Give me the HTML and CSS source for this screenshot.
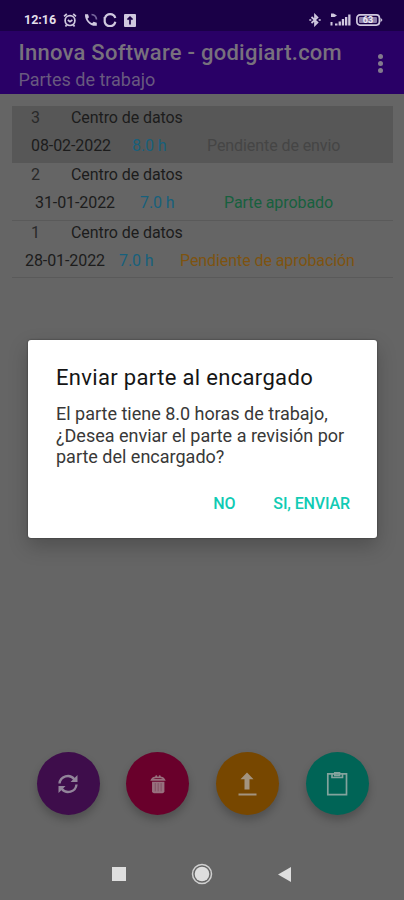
FILE: index.html
```html
<!DOCTYPE html>
<html lang="es">

<head>
  <meta charset="UTF-8">
  <meta name="viewport" content="width=device-width, initial-scale=1">
  <title>Partes de trabajo</title>
  <link rel="stylesheet" href="styles.css">
</head>

<body>
  <div class="status-bar">
    <span class="clock">12:16</span>
    <svg class="alarm" width="14" height="14" viewBox="0 0 14 14">
      <circle cx="7" cy="7.6" r="4.9" />
      <path d="M1 3.4L3.8 1M13 3.4L10.2 1M4.8 7l2.2 1.6L9.4 7M3.5 12l-1 1.4M10.5 12l1 1.4" />
    </svg>
    <svg class="phone" width="14" height="14" viewBox="0 0 14 14">
      <path class="fill" d="M1 1.2h3l1 3-1.5 1.5c1 2 2.6 3.6 4.6 4.6L9.600 8.800l3.200 1v3C6 13.600 .6 7.500 1 1.200z" />
      <path class="arc" d="M7.500 1.500c2.800.3 4.800 2.200 5 5" />
    </svg>
    <svg class="sync" width="14" height="14" viewBox="0 0 14 14">
      <path d="M12.300 5A5.400 5.400 0 0 0 2 5M1.700 8.800a5.400 5.400 0 0 0 10.600 0M1.700 4v5" />
    </svg>
    <svg class="upload-box" width="12" height="13" viewBox="0 0 12 13">
      <rect class="fill" x="0" y="0" width="12" height="13" rx="1" />
      <path class="dark" d="M6 10.500V3.500M3.500 5.700L6 3.200l2.500 2.500" />
    </svg>
    <svg class="bluetooth" width="12" height="14" viewBox="0 0 12 14">
      <path d="M2.500 4l6 5.500L6 12V2l2.500 2.500-6 5.500" />
      <path d="M.3 7h2M9.700 7h2" />
    </svg>
    <svg class="signal" width="21" height="14" viewBox="0 0 21 14">
      <path class="fill" d="M1 .5h2.500L7 2.500 4.500 4H1zM.5 9h2v3.500h-2zM5 10.500h2.500v2H5zM8.600 8.500h2.300v4H8.600zM11.800 6h2.300v6.500h-2.300zM15 4h2.300v8.500H15zM18.200 1.500h2.300v11h-2.300z" />
    </svg>
    <svg class="battery" width="27" height="12" viewBox="0 0 27 12">
      <rect x=".9" y=".9" width="22.500" height="10.200" rx="3" />
      <path class="fill" d="M24.500 3.500L26.500 6l-2 2.500z" />
      <rect class="fill soft" x="3" y="3" width="18" height="6" rx="1" />
      <text x="12" y="9.300">63</text>
    </svg>
  </div>

  <header class="app-bar">
    <div>
      <h1>Innova Software - godigiart.com</h1>
      <p>Partes de trabajo</p>
    </div>
    <div class="more"><i></i><i></i><i></i></div>
  </header>

  <main>
    <ul class="list">
      <li class="item selected">
        <div class="top"><span class="num">3</span><span>Centro de datos</span></div>
        <div class="bottom">
          <span class="date">08-02-2022</span><span class="hours">8.0 h</span><span class="state">Pendiente de envio</span>
        </div>
      </li>
      <li class="item approved">
        <div class="top"><span class="num">2</span><span>Centro de datos</span></div>
        <div class="bottom">
          <span class="date">31-01-2022</span><span class="hours">7.0 h</span><span class="state">Parte aprobado</span>
        </div>
      </li>
      <li class="item pending">
        <div class="top"><span class="num">1</span><span>Centro de datos</span></div>
        <div class="bottom">
          <span class="date">28-01-2022</span><span class="hours">7.0 h</span><span class="state">Pendiente de aprobación</span>
        </div>
      </li>
    </ul>
  </main>

  <div class="dialog">
    <h2>Enviar parte al encargado</h2>
    <p>El parte tiene 8.0 horas de trabajo,<br>¿Desea enviar el parte a revisión por<br>parte del encargado?</p>
    <div class="actions">
      <button>NO</button>
      <button>SI, ENVIAR</button>
    </div>
  </div>

  <div class="fabs">
    <button class="fab purple">
      <svg width="24" height="24" viewBox="0 0 24 24">
        <path d="M3.500 11.500a8.300 8.300 0 0 1 14.800-4.300M20.500 12.500a8.300 8.300 0 0 1-14.800 4.300" />
        <path class="fill" d="M21.500 3v7h-7zM2.500 21v-7h7z" />
      </svg>
    </button>
    <button class="fab red">
      <svg width="24" height="24" viewBox="0 0 24 24">
        <path class="thin" d="M5 7.500c1-2 3-2.700 4.500-2.700h5c1.500 0 3.500.7 4.500 2.700zM9.500 4.500l1-1.800M14.500 4.500l-1-1.800" />
        <path class="fill soft" d="M5.500 9.500h13.500V20a2 2 0 0 1-2 2h-9.500a2 2 0 0 1-2-2z" />
        <path class="line" d="M9 11v9M12.200 11v9M15.400 11v9" />
      </svg>
    </button>
    <button class="fab orange">
      <svg width="24" height="24" viewBox="0 0 24 24">
        <path class="fill" d="M12 .5l6.500 6.800h-4V17.500h-5V7.300h-4zM3.500 21.500h18v2h-18z" />
      </svg>
    </button>
    <button class="fab teal">
      <svg width="24" height="24" viewBox="0 0 24 24">
        <path class="thin" d="M2.800 1.800h18.700v20.900H2.800z" />
        <path class="thin" d="M7 2v3.500h10.500V2M9.800 3.500V.7h4.700v2.800z" />
      </svg>
    </button>
  </div>

  <nav class="nav-bar">
    <svg width="14" height="14" viewBox="0 0 14 14"><path d="M0 0h14v14H0z" /></svg>
    <svg width="22" height="22" viewBox="0 0 22 22">
      <circle class="ring" cx="11" cy="11" r="9.500" />
      <circle cx="11" cy="11" r="7.300" />
    </svg>
    <svg width="13" height="15" viewBox="0 0 13 15"><path d="M0 7.500L13 0v15z" /></svg>
  </nav>
</body>

</html>
```

FILE: styles.css
```css
* {
  box-sizing: border-box;
}

body {
  margin: 0;
  height: 900px;
  display: flex;
  flex-direction: column;
  overflow: hidden;
  background: #656565;
  font-family: Roboto, sans-serif;
}

h1,
h2,
p,
ul {
  margin: 0;
  padding: 0;
  font-weight: 400;
}

button {
  border: 0;
  padding: 0;
  background: none;
  font-family: inherit;
}

svg {
  display: block;
  flex: none;
}

.status-bar {
  display: flex;
  align-items: center;
  height: 31px;
  padding: 9px 21px 0 24px;
  background: #1a0047;
}

.clock {
  width: 33px;
  margin-right: 6px;
  color: #e3dfea;
  font-size: 12.500px;
  font-weight: 700;
  line-height: 14px;
}

.status-bar svg {
  fill: none;
  stroke: #d0c8df;
  stroke-width: 1.7;
}

.status-bar .fill {
  fill: #d0c8df;
  stroke: none;
}

.status-bar .arc {
  stroke: #75659b;
}

.status-bar .sync {
  stroke-width: 2.200;
}

.status-bar .dark {
  stroke: #1a0047;
}

.status-bar .soft {
  fill: #8b7da8;
}

.status-bar text {
  fill: #eeeaf5;
  stroke: none;
  font-size: 9px;
  font-weight: 700;
  text-anchor: middle;
}

.phone {
  margin-left: 7px;
}

.sync {
  margin-left: 5px;
}

.upload-box {
  margin-left: 7px;
}

.bluetooth {
  margin-left: auto;
}

.signal {
  margin-left: 9px;
}

.battery {
  margin-left: 5px;
}

.app-bar {
  display: flex;
  justify-content: space-between;
  height: 63px;
  padding: 8px 21px 0 18.500px;
  background: #290066;
}

.app-bar h1 {
  color: #78717d;
  font-size: 22px;
  font-weight: 500;
  line-height: 27px;
  letter-spacing: .25px;
  white-space: nowrap;
}

.app-bar p {
  color: #68597f;
  font-size: 18px;
  line-height: 27px;
}

.more {
  display: flex;
  flex-direction: column;
  gap: 2px;
  padding-top: 14.500px;
}

.more i {
  width: 5px;
  height: 5px;
  border-radius: 50%;
  background: #827a8d;
}

main {
  flex: 1;
  padding: 12px 11px 0 12px;
}

.list {
  list-style: none;
}

.item {
  height: 57.300px;
  border-bottom: 1px solid #5a5a5a;
  font-size: 16px;
  color: #1c1c1c;
}

.item.selected {
  background: #575757;
  border-color: #575757;
}

.top {
  display: flex;
  padding-left: 19px;
  line-height: 23px;
  letter-spacing: -.08px;
}

.num {
  width: 40px;
  color: #292929;
}

.bottom {
  display: flex;
  padding-left: 19px;
  line-height: 33px;
  letter-spacing: -.08px;
  white-space: nowrap;
}

.date {
  width: 101px;
}

.hours {
  width: 75px;
  color: #17607c;
}

.state {
  color: #454545;
}

.approved .bottom {
  padding-left: 23px;
}

.approved .date {
  width: 105px;
}

.approved .hours {
  width: 84px;
}

.approved .state {
  color: #17603e;
}

.pending .bottom {
  padding-left: 13px;
}

.pending .date {
  width: 94px;
}

.pending .hours {
  width: 61px;
}

.pending .state {
  color: #7e5310;
}

.dialog {
  position: absolute;
  left: 28px;
  top: 340px;
  width: 349px;
  height: 198px;
  padding: 23px 27px 0 28px;
  border-radius: 3px;
  background: #fff;
  box-shadow: 0 8px 20px rgba(0, 0, 0, .22), 0 0 2px rgba(0, 0, 0, .5);
}

.dialog h2 {
  color: #151515;
  font-size: 22px;
  line-height: 30px;
  letter-spacing: .33px;
  white-space: nowrap;
}

.dialog p {
  margin-top: 10px;
  color: #383838;
  font-size: 18px;
  line-height: 21.500px;
  white-space: nowrap;
}

.actions {
  display: flex;
  justify-content: flex-end;
  gap: 38px;
  margin-top: 26px;
}

.actions button {
  color: #10cbb4;
  font-size: 16px;
  font-weight: 500;
  line-height: 20px;
  letter-spacing: -.12px;
}

.fabs {
  display: flex;
  gap: 26.700px;
  padding-left: 36.500px;
  margin-bottom: 33px;
}

.fab {
  display: grid;
  place-items: center;
  width: 63px;
  height: 63px;
  border-radius: 50%;
  box-shadow: 0 5px 8px rgba(0, 0, 0, .22);
}

.fab svg {
  fill: none;
  stroke: #92849a;
  stroke-width: 2.400;
}

.fab .fill {
  fill: #92849a;
  stroke: none;
}

.fab .thin {
  stroke-width: 1.700;
}

.purple {
  background: #3e0d4b;
}

.red {
  background: #69002b;
}

.red svg {
  width: 22px;
  height: 22px;
  stroke: #98707e;
}

.red .soft {
  fill: #98707e;
}

.red .line {
  stroke: #805062;
  stroke-width: 1;
}

.orange {
  background: #774700;
}

.orange .fill {
  fill: #a39480;
}

.teal {
  background: #006456;
}

.teal svg {
  stroke: #83a39d;
}

.nav-bar {
  display: flex;
  align-items: center;
  height: 52px;
  padding-left: 111.500px;
  gap: 65.300px;
  fill: #dedede;
}

.nav-bar .ring {
  fill: none;
  stroke: #d0d0d0;
  stroke-width: 1.500;
}
```
